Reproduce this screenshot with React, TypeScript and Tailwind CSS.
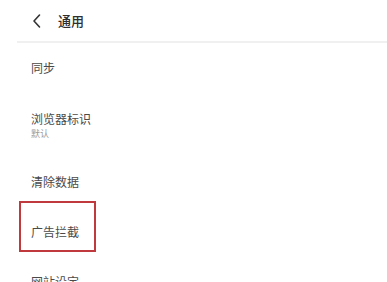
const rows = [
  { title: "同步" },
  { title: "浏览器标识", sub: "默认" },
  { title: "清除数据" },
  { title: "广告拦截", marked: true },
  { title: "网站设定" },
];

export default function App() {
  return (
    <div
      className="h-[282px] w-[387px] overflow-hidden bg-white"
      style={{ fontFamily: '"Noto Sans CJK SC", "Noto Sans", sans-serif' }}
    >
      {/* 顶栏 */}
      <div className="flex h-[41px] items-center pl-[31px]">
        <svg width="12" height="16" viewBox="0 0 12 16" className="text-[#333]">
          <path d="M8.5 2 L3 8 L8.5 14" fill="none" stroke="currentColor" strokeWidth="1.6" strokeLinecap="round" strokeLinejoin="round" />
        </svg>
        <span className="ml-[15px] text-[13px] font-medium text-[#2e2e2e]">通用</span>
      </div>
      <div className="ml-[17px] h-[2px] bg-[#f0f0f0]" />

      <ul>
        {rows.map((r) => (
          <li
            key={r.title}
            className={`relative flex flex-col justify-center pl-[31px] ${r.sub ? "h-[64px]" : "h-[50px]"}`}
          >
            <span className="text-[12px] leading-[16px] text-[#4a4a4a]">{r.title}</span>
            {r.sub && <span className="text-[9px] leading-[13px] text-[#9a9a9a]">{r.sub}</span>}
            {r.marked && (
              <div className="absolute left-[19px] top-[-6px] h-[51px] w-[77px] border-2 border-[#c0393c]" />
            )}
          </li>
        ))}
      </ul>
    </div>
  );
}
